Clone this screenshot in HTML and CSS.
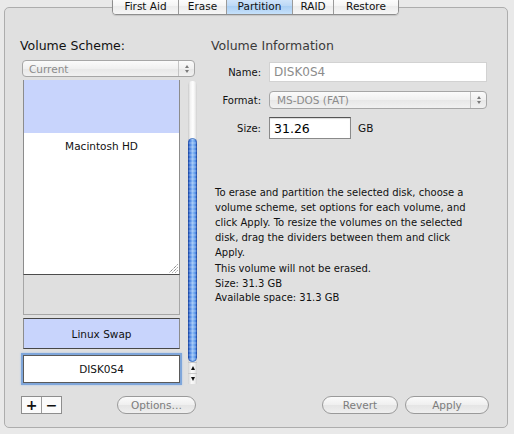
FILE: index.html
```html
<!DOCTYPE html>
<html>
<head>
<meta charset="utf-8">
<link rel="stylesheet" href="styles.css">
</head>
<body>
<div class="tabbox">
  <div class="tabs">
    <div class="tab t-first">First Aid</div>
    <div class="tab t-erase">Erase</div>
    <div class="tab t-part sel">Partition</div>
    <div class="tab t-raid">RAID</div>
    <div class="tab t-restore">Restore</div>
  </div>
  <div class="content">
    <div class="left">
      <div class="heading">Volume Scheme:</div>
      <div class="popup scheme">
        <span class="ptxt">Current</span>
        <span class="parr"><i class="up"></i><i class="dn"></i></span>
      </div>
      <div class="map">
        <div class="parts">
          <div class="part mac">
            <div class="used"></div>
            <div class="plabel">Macintosh HD</div>
            <svg class="grip" width="10" height="10" viewBox="0 0 10 10">
              <path d="M9.5 1.5 L1.5 9.5 M9.5 4.5 L4.5 9.5 M9.5 7.5 L7.5 9.5" stroke="#555" stroke-width="1" stroke-dasharray="1 1" fill="none"/>
            </svg>
          </div>
          <div class="part free"></div>
          <div class="part swap">Linux Swap</div>
          <div class="part disk">DISK0S4</div>
        </div>
        <div class="scrollbar">
          <div class="track"><div class="thumb"></div></div>
          <div class="sarrow"><i class="up"></i></div>
          <div class="sarrow"><i class="dn"></i></div>
        </div>
      </div>
      <div class="bar">
        <div class="plusminus"><span class="pm">+</span><span class="pm">−</span></div>
        <div class="btn options">Options…</div>
      </div>
    </div>
    <div class="right">
      <div class="heading info">Volume Information</div>
      <div class="row r-name">
        <span class="lbl">Name:</span>
        <div class="field name">DISK0S4</div>
      </div>
      <div class="row r-format">
        <span class="lbl">Format:</span>
        <div class="popup format">
          <span class="ptxt">MS-DOS (FAT)</span>
          <span class="parr"><i class="up"></i><i class="dn"></i></span>
        </div>
      </div>
      <div class="row r-size">
        <span class="lbl">Size:</span>
        <div class="field size">31.26</div>
        <span class="unit">GB</span>
      </div>
      <p class="desc">To erase and partition the selected disk, choose a<br>volume scheme, set options for each volume, and<br>click Apply. To resize the volumes on the selected<br>disk, drag the dividers between them and click<br>Apply.</p>
      <p class="desc stat">This volume will not be erased.<br>Size: 31.3 GB<br>Available space: 31.3 GB</p>
      <div class="actions">
        <div class="btn revert">Revert</div>
        <div class="btn apply">Apply</div>
      </div>
    </div>
  </div>
</div>
</body>
</html>
```
FILE: styles.css
```css
html, body {
  margin: 0;
}
body {
  width: 514px;
  height: 434px;
  overflow: hidden;
  box-sizing: border-box;
  padding-top: 7px;
  background: #e9e9e9;
  font-family: "DejaVu Sans", sans-serif;
  color: #111;
}
.tabbox {
  position: relative;
  margin-left: 4px;
  width: 504px;
  height: 421px;
  box-sizing: border-box;
  border: 1px solid #adadad;
  border-radius: 5px;
  background: #e0e0e0;
  padding: 30px 0 0 15px;
}
.tabs {
  position: absolute;
  top: -11px;
  left: 107px;
  height: 18px;
  display: flex;
  box-sizing: border-box;
  border: 1px solid #8e8e8e;
  border-radius: 4px;
  overflow: hidden;
  box-shadow: 0 1px 1px rgba(0,0,0,0.12);
}
.tab {
  display: flex;
  align-items: center;
  justify-content: center;
  font-size: 10.5px;
  color: #111;
  background: linear-gradient(#ffffff, #f4f4f4 50%, #ebebeb 50%, #f6f6f6);
  border-left: 1px solid #9a9a9a;
  box-sizing: border-box;
}
.t-first { width: 65px; border-left: 0; }
.t-erase { width: 48px; }
.t-part { width: 66px; }
.t-raid { width: 41px; }
.t-restore { width: 65px; }
.tab.sel {
  background: linear-gradient(#d6e8fb, #bcd8f6 50%, #a9cef3 50%, #c6e1fb);
}
.content {
  display: flex;
  height: 376px;
}
.left {
  width: 177px;
  display: flex;
  flex-direction: column;
}
.heading {
  font-size: 12.5px;
  line-height: 16px;
  height: 16px;
  white-space: nowrap;
}
.heading.info { color: #3a3a3a; }
.popup {
  display: flex;
  box-sizing: border-box;
  border: 1px solid #a6a6a6;
  border-radius: 4px;
  background: linear-gradient(#fbfbfb, #f0f0f0 50%, #e7e7e7 50%, #f1f1f1);
}
.popup.scheme {
  margin: 6px 0 0 2px;
  width: 173px;
  height: 17px;
}
.ptxt {
  flex: 1;
  padding-left: 6px;
  font-size: 10.5px;
  color: #8b8b8b;
  display: flex;
  align-items: center;
}
.format .ptxt { padding-left: 7px; }
.parr {
  width: 15px;
  border-left: 1px solid #c4c4c4;
  display: flex;
  flex-direction: column;
  align-items: center;
  justify-content: center;
  gap: 2px;
}
i.up, i.dn {
  display: block;
  width: 0;
  height: 0;
  border-left: 2.5px solid transparent;
  border-right: 2.5px solid transparent;
}
i.up { border-bottom: 3px solid #7a7a7a; }
i.dn { border-top: 3px solid #7a7a7a; }
.map {
  display: flex;
  margin-top: 3px;
  height: 304px;
}
.parts {
  margin-left: 3px;
  width: 158px;
}
.part {
  box-sizing: border-box;
  font-size: 10.5px;
}
.part.mac {
  position: relative;
  height: 195px;
  background: #fff;
  border: 1px solid #8c8c8c;
  border-top: 0;
  border-bottom-color: #4c4c4c;
}
.used {
  height: 53px;
  background: #c8d4fc;
}
.plabel {
  margin-top: 6px;
  line-height: 14px;
  text-align: center;
}
.grip {
  position: absolute;
  right: 1px;
  bottom: 1px;
}
.part.free {
  height: 40px;
  border: 1px solid #a6a6a6;
  border-top: 0;
  background: #dfdfdf;
}
.part.swap {
  margin-top: 3px;
  height: 31px;
  border: 1px solid #8c8c8c;
  border-top-color: #474747;
  border-bottom-color: #474747;
  background: #c8d4fc;
  display: flex;
  align-items: center;
  justify-content: center;
}
.part.disk {
  margin-top: 6px;
  height: 28px;
  border: 1px solid #5a5a5a;
  background: #fff;
  display: flex;
  align-items: center;
  justify-content: center;
  box-shadow: 0 0 0 2px #7fa6da, 0 0 2px 2px #a9c4e8;
}
.scrollbar {
  margin: 1px 0 0 8px;
  width: 9px;
  display: flex;
  flex-direction: column;
}
.track {
  height: 281px;
  border-radius: 5px 5px 0 0;
  background: linear-gradient(to right, #c9c9c9, #f2f2f2 25%, #ffffff 55%, #ededed 80%, #cfcfcf);
  position: relative;
}
.thumb {
  position: absolute;
  left: 0;
  right: 0;
  top: 57px;
  height: 224px;
  border-radius: 5px;
  background:
    repeating-linear-gradient(rgba(255,255,255,0.18) 0 2px, rgba(255,255,255,0) 2px 4px),
    linear-gradient(to right, #1f4fbb, #4a82e0 22%, #94c0f6 50%, #609be9 78%, #2858c4);
  box-shadow: inset 0 0 0 1px rgba(20,60,140,0.45);
}
.sarrow {
  height: 11px;
  display: flex;
  align-items: center;
  justify-content: center;
  background: linear-gradient(to right, #d3d3d3, #fafafa 40%, #f2f2f2 70%, #d3d3d3);
  border-top: 1px solid #c8c8c8;
  box-sizing: border-box;
}
.sarrow i.up { border-bottom-color: #111; border-bottom-width: 4px; }
.sarrow i.dn { border-top-color: #111; border-top-width: 4px; }
.bar {
  margin-top: 12px;
  height: 18px;
  display: flex;
  justify-content: space-between;
}
.plusminus {
  margin-left: 1px;
  display: flex;
  border: 1px solid #8e8e8e;
  box-sizing: border-box;
  height: 18px;
  background: #fbfbfb;
}
.pm {
  width: 19px;
  display: flex;
  align-items: center;
  justify-content: center;
  font-size: 14px;
  font-weight: bold;
  line-height: 1;
}
.pm + .pm { border-left: 1px solid #9a9a9a; }
.btn {
  box-sizing: border-box;
  height: 18px;
  border: 1px solid #9a9a9a;
  border-radius: 9px;
  background: linear-gradient(#fbfbfb, #efefef 50%, #e4e4e4 50%, #efefef);
  font-size: 10.5px;
  color: #7c7c7c;
  display: flex;
  align-items: center;
  justify-content: center;
}
.btn.options { width: 79px; margin-right: 1px; }
.right {
  margin-left: 14px;
  width: 278px;
  display: flex;
  flex-direction: column;
}
.row {
  display: flex;
  align-items: center;
}
.lbl {
  width: 50px;
  margin-right: 8px;
  text-align: right;
  font-size: 10px;
}
.r-name { margin-top: 8px; }
.r-format { margin-top: 9px; }
.r-size { margin-top: 8px; }
.field {
  box-sizing: border-box;
  background: #fff;
  display: flex;
  align-items: center;
  padding-left: 4px;
}
.field.name {
  width: 218px;
  height: 20px;
  border: 1px solid #d2d2d2;
  font-size: 12px;
  color: #8c8c8c;
}
.popup.format {
  width: 218px;
  height: 18px;
}
.field.size {
  width: 82px;
  height: 22px;
  border: 1px solid #8a8a8a;
  border-top-color: #555;
  box-shadow: inset 0 1px 1px rgba(0,0,0,0.15);
  font-size: 12.5px;
  color: #000;
}
.unit {
  margin-left: 7px;
  font-size: 10.5px;
}
.desc {
  margin: 46px 0 0 0;
  padding-left: 4px;
  font-size: 10px;
  line-height: 15px;
  white-space: nowrap;
}
.desc.stat {
  margin-top: 2px;
  line-height: 14.5px;
}
.actions {
  margin-top: auto;
  display: flex;
  justify-content: flex-end;
  gap: 7px;
}
.btn.revert { width: 76px; }
.btn.apply { width: 84px; }
```
